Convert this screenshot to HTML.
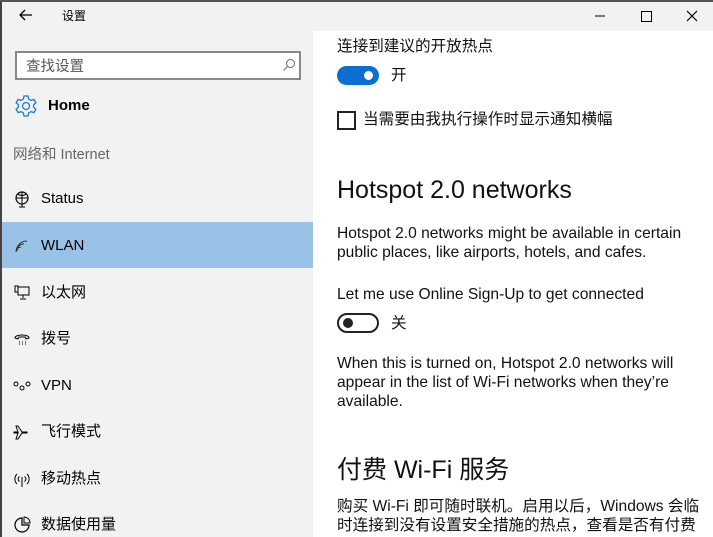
<!DOCTYPE html>
<html><head><meta charset="utf-8"><style>
*{margin:0;padding:0;box-sizing:border-box}
body{width:713px;height:537px;overflow:hidden;background:#fff;font-family:"Liberation Sans","Noto Sans CJK SC",sans-serif;color:#000;position:relative}
.a{position:absolute;white-space:nowrap}
#title{left:0;top:0;width:713px;height:31px;background:#f2f2f2}
#left{left:0;top:31px;width:313px;height:506px;background:#f2f2f2}
#lb{left:0;top:0;width:2px;height:537px;background:#444}
.t{font-size:15px;line-height:19px}
.r{font-size:15.6px;line-height:19px;color:#111}
.ic{position:absolute;left:13px;width:18px;height:18px}
</style></head><body>
<div class="a" id="title"></div>
<div class="a" id="left"></div>
<div class="a" id="lb"></div>
<div class="a" style="left:0;top:0;width:713px;height:2px;background:#555"></div>
<svg class="a" style="left:19px;top:9px" width="14" height="12"><path d="M13 6H1M6 1L1 6l5 5" stroke="#000" stroke-width="1.3" fill="none"/></svg>
<div class="a" style="left:62px;top:7px;font-size:12px">设置</div>
<svg class="a" style="left:595px;top:8px" width="110" height="16"><path d="M0 8h10" stroke="#000"/><rect x="46.5" y="3.5" width="10" height="10" stroke="#000" fill="none"/><path d="M92 3l10 10M102 3L92 13" stroke="#000" stroke-width="1.2"/></svg>
<div class="a" style="left:15px;top:51px;width:286px;height:29px;border:2px solid #888;background:#fff"></div>
<div class="a" style="left:26px;top:55px;font-size:14.5px;color:#555">查找设置</div>
<svg class="a" style="left:282px;top:58px" width="14" height="14"><circle cx="8.5" cy="5.5" r="4" stroke="#666" fill="none"/><path d="M5.5 8.5L1.5 12.5" stroke="#666"/></svg>
<svg class="a" style="left:14px;top:94px" width="24" height="24" viewBox="0 0 24 24"><path d="M10 2h4l.6 3 2.4 1.4 2.9-1 2 3.4-2.3 2v2.4l2.3 2-2 3.4-2.9-1L14.6 19 14 22h-4l-.6-3-2.4-1.4-2.9 1-2-3.4 2.3-2v-2.4l-2.3-2 2-3.4 2.9 1L9.4 5z" stroke="#1a7bd1" stroke-width="1.3" fill="none"/><circle cx="12" cy="12" r="3.5" stroke="#1a7bd1" stroke-width="1.3" fill="none"/></svg>
<div class="a" style="left:48px;top:97px;font-size:15px;font-weight:bold">Home</div>
<div class="a" style="left:13px;top:143px;font-size:14.5px;color:#666">网络和 Internet</div>
<div class="a" style="left:2px;top:222px;width:311px;height:46px;background:#99c2e6"></div>
<svg class="ic" style="top:190px" viewBox="0 0 18 18"><circle cx="9" cy="8" r="6" stroke="#000" fill="none" stroke-width="1.2"/><path d="M3 8h12M9 2v12M5 4c2 2 6 2 8 0M9 14v3M6 17h6" stroke="#000" fill="none"/></svg>
<svg class="ic" style="top:237px" viewBox="0 0 18 18"><path d="M3 15a2 2 0 0 1 2-2M3 15a5 5 0 0 1 5-5M3 15a8 8 0 0 1 8-8M3 15a11 11 0 0 1 11-11" stroke="#333" fill="none"/></svg>
<svg class="ic" style="top:284px" viewBox="0 0 18 18"><rect x="5" y="3" width="11" height="8" stroke="#000" fill="none"/><path d="M2 2h3v6H2zM10 11v3M7 15h6" stroke="#000" fill="none"/></svg>
<svg class="ic" style="top:330px" viewBox="0 0 18 18"><path d="M2 8c0-4 14-4 14 0l-3 1-1-2H6L5 9z" stroke="#000" fill="none"/><path d="M6 12h1M9 12h1M12 12h1M6 14h1M9 14h1M12 14h1" stroke="#000"/></svg>
<svg class="ic" style="top:377px" viewBox="0 0 18 18"><circle cx="3" cy="7" r="2" stroke="#000" fill="none"/><circle cx="9" cy="11" r="2" stroke="#000" fill="none"/><circle cx="15" cy="7" r="2" stroke="#000" fill="none"/></svg>
<svg class="ic" style="top:423px" viewBox="0 0 18 18"><path d="M1 9h4l-2-6h2l4 6h5a1 1 0 0 1 0 1H9l-4 6H3l2-6H1z" stroke="#000" fill="none"/></svg>
<svg class="ic" style="top:470px" viewBox="0 0 18 18"><path d="M4 4a7 7 0 0 0 0 10M14 4a7 7 0 0 1 0 10M6.5 6.5a3 3 0 0 0 0 5M11.5 6.5a3 3 0 0 1 0 5M9 7v10" stroke="#000" fill="none"/></svg>
<svg class="ic" style="top:516px" viewBox="0 0 18 18"><path d="M9 2a7 7 0 1 0 7 7H9z" stroke="#000" fill="none" stroke-width="1.2"/><path d="M11 1v6h6a6 6 0 0 0-6-6z" stroke="#000" fill="none"/></svg>
<div class="a t" style="left:41px;top:189px">Status</div>
<div class="a t" style="left:41px;top:236px">WLAN</div>
<div class="a t" style="left:41px;top:283px">以太网</div>
<div class="a t" style="left:41px;top:329px">拨号</div>
<div class="a t" style="left:41px;top:376px">VPN</div>
<div class="a t" style="left:41px;top:422px">飞行模式</div>
<div class="a t" style="left:41px;top:469px">移动热点</div>
<div class="a t" style="left:41px;top:515px">数据使用量</div>

<div class="a r" style="left:337px;top:37px">连接到建议的开放热点</div>
<div class="a" style="left:337px;top:66px;width:42px;height:19px;border-radius:10px;background:#0a6fd0"></div>
<div class="a" style="left:364px;top:71px;width:9px;height:9px;border-radius:50%;background:#fff"></div>
<div class="a r" style="left:391px;top:66px">开</div>
<div class="a" style="left:337px;top:111px;width:19px;height:19px;border:2px solid #222"></div>
<div class="a r" style="left:363px;top:110px">当需要由我执行操作时显示通知横幅</div>
<div class="a" style="left:337px;top:176px;font-size:25px;color:#111">Hotspot 2.0 networks</div>
<div class="a r" style="left:337px;top:224px">Hotspot 2.0 networks might be available in certain<br>public places, like airports, hotels, and cafes.</div>
<div class="a r" style="left:337px;top:285px">Let me use Online Sign-Up to get connected</div>
<div class="a" style="left:337px;top:313px;width:42px;height:20px;border-radius:10px;border:2px solid #222"></div>
<div class="a" style="left:343px;top:318px;width:10px;height:10px;border-radius:50%;background:#222"></div>
<div class="a r" style="left:391px;top:314px">关</div>
<div class="a r" style="left:337px;top:354px">When this is turned on, Hotspot 2.0 networks will<br>appear in the list of Wi-Fi networks when they’re<br>available.</div>
<div class="a" style="left:337px;top:450px;font-size:25px;color:#111">付费 Wi-Fi 服务</div>
<div class="a r" style="left:337px;top:497px">购买 Wi-Fi 即可随时联机。启用以后，Windows 会临<br>时连接到没有设置安全措施的热点，查看是否有付费</div>
</body></html>
